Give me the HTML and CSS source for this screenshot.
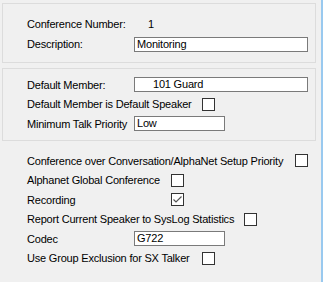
FILE: index.html
```html
<!DOCTYPE html>
<html>
  <head>
    <title>Conference Settings</title>
    <link rel="stylesheet" href="styles.css">
  </head>
  <body>
    <div class="window">
      <div class="group first">
        <div class="row tall">
          <span class="label lbl-num">Conference Number:</span>
          <span class="value">1</span>
        </div>
        <div class="row tall">
          <span class="label lbl-field">Description:</span>
          <div class="input wide">Monitoring</div>
        </div>
      </div>

      <div class="group second">
        <div class="row">
          <span class="label lbl-field">Default Member:</span>
          <div class="input wide indent">101 Guard</div>
        </div>
        <div class="row">
          <span class="label lbl-175">Default Member is Default Speaker</span>
          <span class="check"></span>
        </div>
        <div class="row">
          <span class="label lbl-field">Minimum Talk Priority</span>
          <div class="input short">Low</div>
        </div>
      </div>

      <div class="loose">
        <div class="row">
          <span class="label lbl-268">Conference over Conversation/AlphaNet Setup Priority</span>
          <span class="check"></span>
        </div>
        <div class="row">
          <span class="label lbl-144">Alphanet Global Conference</span>
          <span class="check"></span>
        </div>
        <div class="row">
          <span class="label lbl-144">Recording</span>
          <span class="check checked">
            <svg width="11" height="11" viewBox="0 0 11 11"><path d="M1.5 5.5 L4 8 L9.5 2.5" fill="none" stroke="#555" stroke-width="1.2"/></svg>
          </span>
        </div>
        <div class="row">
          <span class="label lbl-217">Report Current Speaker to SysLog Statistics</span>
          <span class="check"></span>
        </div>
        <div class="row">
          <span class="label lbl-field">Codec</span>
          <div class="input short">G722</div>
        </div>
        <div class="row">
          <span class="label lbl-175">Use Group Exclusion for SX Talker</span>
          <span class="check"></span>
        </div>
      </div>
    </div>
  </body>
</html>
```

FILE: styles.css
```css
body {
  margin: 0;
  background-color: #f0f0f0;
  font-family: "Liberation Sans", Arial, sans-serif;
  font-size: 11px;
  letter-spacing: -0.2px;
  color: black;
}

div.window {
  width: 321px;
  height: 282px;
  border-right: 2px solid #99c9ef;
  overflow: hidden;
}

div.group {
  width: 312px;
  margin-left: 2px;
  border: 1px solid #dcdcdc;
}

div.group.first {
  margin-top: 3px;
  padding: 10px 0 8px 0;
}

div.group.second {
  margin-top: 5px;
  padding: 6px 0 6.5px 0;
}

div.loose {
  margin-top: 10px;
}

div.row {
  display: flex;
  align-items: center;
  height: 19.5px;
  padding-left: 24px;
}

div.loose div.row {
  padding-left: 27px;
}

div.row.tall {
  height: 20px;
}

span.label {
  flex: none;
  white-space: nowrap;
}

span.lbl-num { width: 121px; }
span.lbl-field { width: 107px; }
span.lbl-144 { width: 144px; }
span.lbl-175 { width: 175px; }
span.lbl-217 { width: 217px; }
span.lbl-268 { width: 268px; }

div.input {
  box-sizing: border-box;
  height: 15px;
  line-height: 13px;
  background-color: white;
  border: 1px solid #7a7a7a;
  padding-left: 2px;
}

div.input.wide { width: 174px; }
div.input.short { width: 91px; }
div.input.indent { padding-left: 18px; }

span.check {
  box-sizing: border-box;
  width: 13px;
  height: 13px;
  background-color: white;
  border: 1px solid #333;
  display: flex;
  align-items: center;
  justify-content: center;
}
```
